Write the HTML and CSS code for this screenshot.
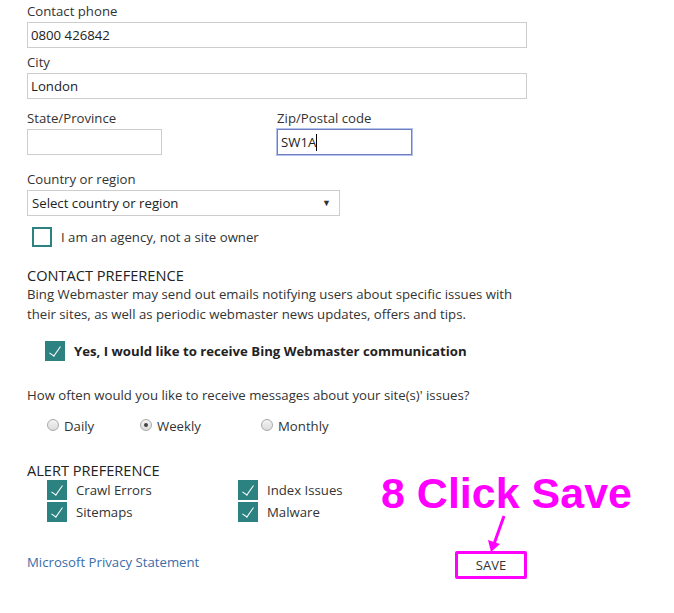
FILE: index.html
```html
<!DOCTYPE html>
<html>
<head>
    <meta name="viewport" content="width=device-width, initial-scale=1.0">
    <link rel="stylesheet" href="styles.css">
</head>
<body>
    <div class="form">
        <label class="field-label">Contact phone</label>
        <div class="input wide">0800 426842</div>

        <label class="field-label">City</label>
        <div class="input wide">London</div>

        <div class="row-two">
            <div class="col">
                <label class="field-label">State/Province</label>
                <div class="input short"></div>
            </div>
            <div class="col">
                <label class="field-label">Zip/Postal code</label>
                <div class="input short focused">SW1A<span class="caret"></span></div>
            </div>
        </div>

        <label class="field-label country">Country or region</label>
        <div class="input select">
            <span>Select country or region</span>
            <span class="arrow">▼</span>
        </div>

        <div class="check-line agency">
            <span class="box empty"></span>
            <span>I am an agency, not a site owner</span>
        </div>

        <h3 class="section-title">CONTACT PREFERENCE</h3>
        <p class="desc">Bing Webmaster may send out emails notifying users about specific issues with their sites, as well as periodic webmaster news updates, offers and tips.</p>

        <div class="check-line consent">
            <span class="box checked"></span>
            <strong>Yes, I would like to receive Bing Webmaster communication</strong>
        </div>

        <p class="question">How often would you like to receive messages about your site(s)' issues?</p>
        <div class="radios">
            <div class="radio-item daily"><span class="radio"></span>Daily</div>
            <div class="radio-item weekly"><span class="radio on"></span>Weekly</div>
            <div class="radio-item"><span class="radio"></span>Monthly</div>
        </div>

        <h3 class="section-title alert">ALERT PREFERENCE</h3>
        <div class="alerts">
            <div class="check-line"><span class="box checked"></span>Crawl Errors</div>
            <div class="check-line"><span class="box checked"></span>Index Issues</div>
            <div class="check-line"><span class="box checked"></span>Sitemaps</div>
            <div class="check-line"><span class="box checked"></span>Malware</div>
        </div>

        <div class="footer">
            <a class="privacy" href="#">Microsoft Privacy Statement</a>
            <button class="save-btn">SAVE</button>
        </div>
    </div>

    <div class="callout">8 Click Save</div>
    <svg class="callout-arrow" width="30" height="40" viewBox="0 0 30 40">
        <line x1="22" y1="2" x2="12" y2="30" stroke="#ff00ff" stroke-width="3"/>
        <polygon points="6,26 18,30 9,38" fill="#ff00ff"/>
    </svg>
</body>
</html>
```

FILE: styles.css
```css
* {margin: 0; padding: 0; box-sizing: border-box;}
body {
    background: #fff;
    font-family: "Open Sans", sans-serif;
    font-size: 13.2px;
    color: #333;
    position: relative;
    min-height: 613px;
}

.form {
    width: 500px;
    margin-left: 27px;
    padding-top: 1px;
}

.field-label {
    display: block;
    line-height: 21px;
    font-size: 13.2px;
}

.input {
    height: 26px;
    border: 1px solid #cdcdcd;
    padding: 0 3px;
    line-height: 24px;
    font-size: 13.2px;
    color: #222;
    background: #fff;
    margin-bottom: 4px;
}

.wide { width: 500px; }
.short { width: 135px; }

.focused {
    border-color: #6f7fbf;
    box-shadow: 0 0 0 1px #b4c2ee;
}

.caret {
    display: inline-block;
    width: 1px;
    height: 17px;
    background: #000;
    vertical-align: -4px;
}

.row-two {
    display: flex;
    gap: 115px;
    margin-top: 9px;
}

.country {
    margin-top: 10px;
}

.select {
    width: 313px;
    display: flex;
    justify-content: space-between;
    padding: 0 8px 0 4px;
}

.select .arrow {
    font-size: 9px;
    color: #333;
}

.check-line {
    display: flex;
    align-items: center;
    gap: 9px;
    height: 20px;
    font-size: 13.2px;
}

.box {
    width: 20px;
    height: 20px;
    flex-shrink: 0;
    position: relative;
}

.box.empty {
    border: 2px solid #2b8280;
}

.box.checked {
    background: #2b8280;
}

.box.checked::after {
    content: '';
    position: absolute;
    left: 7px;
    top: 3px;
    width: 5px;
    height: 11px;
    border: solid #fff;
    border-width: 0 1.5px 1.5px 0;
    transform: rotate(35deg);
}

.agency {
    margin: 11px 0 0 5px;
}

.section-title {
    font-weight: normal;
    font-size: 14.6px;
    color: #222;
    margin-top: 18px;
    line-height: 20px;
}

.desc {
    line-height: 20px;
    font-size: 13.2px;
    margin-top: -1px;
}

.consent {
    margin: 17px 0 0 18px;
}

.consent strong {
    color: #222;
}

.question {
    margin-top: 24px;
    line-height: 20px;
    font-size: 13.2px;
}

.radios {
    display: flex;
    margin: 11px 0 0 20px;
    line-height: 20px;
    font-size: 13.2px;
}

.radio-item {
    display: flex;
    align-items: center;
    gap: 5px;
}

.daily { width: 93px; }
.weekly { width: 121px; }

.radio {
    width: 12px;
    height: 12px;
    border-radius: 50%;
    border: 1px solid #a9a9a9;
    background: linear-gradient(#f3f3f3, #dcdcdc);
    position: relative;
    margin-top: -3px;
}

.radio.on::after {
    content: '';
    position: absolute;
    left: 3px;
    top: 3px;
    width: 4px;
    height: 4px;
    border-radius: 50%;
    background: #444;
}

.alert {
    margin-top: 24px;
}

.alerts {
    display: grid;
    grid-template-columns: 191px 191px;
    row-gap: 2px;
    margin-left: 20px;
}

.footer {
    display: flex;
    justify-content: space-between;
    align-items: flex-start;
    margin-top: 29px;
}

.privacy {
    color: #3b6ea8;
    text-decoration: none;
    font-size: 13.2px;
    line-height: 20px;
    margin-top: 1px;
}

.save-btn {
    width: 72px;
    height: 28px;
    border: 3px solid #ff00ff;
    border-radius: 2px;
    background: #fff;
    font-family: "Open Sans", sans-serif;
    font-size: 13px;
    color: #333;
}

.callout {
    position: absolute;
    left: 381px;
    top: 468px;
    font-family: "Liberation Sans", Arial, sans-serif;
    font-weight: bold;
    font-size: 43px;
    color: #ff00ff;
    line-height: 50px;
}

.callout-arrow {
    position: absolute;
    left: 482px;
    top: 514px;
}
```
